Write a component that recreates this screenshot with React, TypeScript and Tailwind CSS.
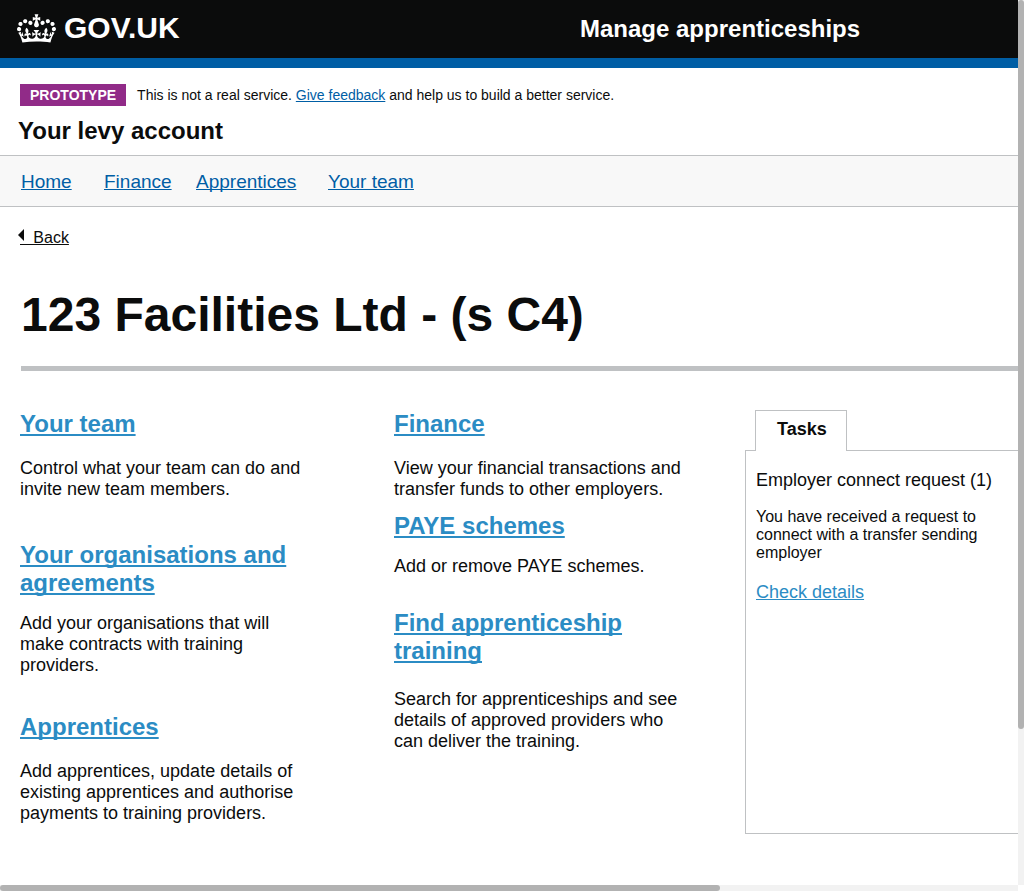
import type { ReactNode } from "react";

function Crown() {
  return (
    <svg viewBox="0 0 132 97" className="h-[29px] w-[39px]" fill="currentColor" aria-hidden="true">
      <path d="M25 30.2c3.5 1.5 7.7-.2 9.1-3.7 1.5-3.6-.2-7.8-3.9-9.2-3.6-1.4-7.6.3-9.1 3.9-1.4 3.5.3 7.5 3.9 9zM9 39.5c3.6 1.5 7.8-.2 9.2-3.7 1.5-3.6-.2-7.8-3.9-9.1-3.6-1.5-7.6.2-9.1 3.8-1.4 3.5.3 7.5 3.8 9zM4.4 57.2c3.5 1.5 7.7-.2 9.1-3.8 1.5-3.6-.2-7.7-3.9-9.1-3.5-1.5-7.6.3-9.1 3.8-1.4 3.5.3 7.6 3.9 9.1zm38.3-21.4c3.5 1.5 7.7-.2 9.1-3.8 1.5-3.6-.2-7.7-3.9-9.1-3.6-1.5-7.6.3-9.1 3.8-1.3 3.6.4 7.7 3.9 9.1zm64.4-5.6c-3.6 1.5-7.8-.2-9.1-3.7-1.5-3.6.2-7.8 3.8-9.2 3.6-1.4 7.7.3 9.2 3.9 1.3 3.5-.4 7.5-3.9 9zm15.9 9.3c-3.6 1.5-7.7-.2-9.1-3.7-1.5-3.6.2-7.8 3.7-9.1 3.6-1.5 7.7.2 9.2 3.8 1.5 3.5-.3 7.5-3.8 9zm4.7 17.7c-3.6 1.5-7.8-.2-9.2-3.8-1.5-3.6.2-7.7 3.9-9.1 3.6-1.5 7.7.3 9.2 3.8 1.3 3.5-.4 7.6-3.9 9.1zM89.3 35.8c-3.6 1.5-7.8-.2-9.2-3.8-1.4-3.6.2-7.7 3.9-9.1 3.6-1.5 7.7.3 9.2 3.8 1.4 3.6-.3 7.7-3.9 9.1zM69.7 17.7l8.9 4.7V9.3l-8.9 2.8c-.2-.3-.5-.6-.9-.9L72.4 0H59.6l3.5 11.2c-.3.3-.6.5-.9.9l-8.8-2.8v13.1l8.8-4.7c.3.3.6.7.9.9l-5 15.4v.1c-.2.8-.4 1.6-.4 2.4 0 4.1 3.1 7.5 7 8.1h.2c.3 0 .7.1 1 .1.4 0 .7 0 1-.1h.2c4-.6 7.1-4.1 7.1-8.1 0-.8-.1-1.7-.4-2.4V34l-5.1-15.4c.4-.2.7-.6 1-.9zM66 92.8c16.9 0 32.8 1.1 47.1 3.2 4-16.9 8.9-26.7 14-33.5l-9.6-3.4c1 4.9 1.1 7.2 0 10.2-1.5-1.4-3-4.3-4.2-8.7L108.6 76c2.8-2 5-3.2 7.5-3.3-4.4 9.4-10 11.9-13.6 11.2-4.3-.8-6.3-4.6-5.6-7.9 1-4.7 5.7-5.9 8-.5 4.3-8.7-3-11.4-7.6-8.8 7.1-7.2 7.9-13.5 2.1-21.1-8 6.1-8.1 12.3-4.5 20.8-4.7-5.4-12.1-2.5-9.5 6.2 3.4-5.2 7.9-2 7.2 3.1-.6 4.3-6.4 7.8-13.5 7.2-10.3-.9-10.9-8-11.2-13.8 2.5-.5 7.1 1.8 11 7.3L80.2 60c-4.1 4.4-8 5.3-12.3 5.4 1.4-4.4 8-11.6 8-11.6H55.5s6.4 7.2 7.9 11.6c-4.2-.1-8-1-12.3-5.4l1.4 16.4c3.9-5.5 8.5-7.7 10.9-7.3-.3 5.8-.9 12.8-11.1 13.8-7.2.6-12.9-2.9-13.5-7.2-.7-5 3.8-8.3 7.1-3.1 2.7-8.7-4.6-11.6-9.4-6.2 3.7-8.5 3.6-14.7-4.6-20.8-5.8 7.6-5 13.9 2.2 21.1-4.7-2.6-11.9.1-7.7 8.8 2.3-5.5 7.1-4.2 8.1.5.7 3.3-1.3 7.1-5.7 7.9-3.5.7-9-1.8-13.5-11.2 2.5.1 4.7 1.3 7.5 3.3l-4.7-15.4c-1.2 4.4-2.7 7.2-4.3 8.7-1.1-3-.9-5.3 0-10.2l-9.5 3.4c5 6.9 9.9 16.7 14 33.5 14.8-2.1 30.8-3.2 47.7-3.2z" />
    </svg>
  );
}

function Topic({ title, className, children }: { title: string; className: string; children: ReactNode }) {
  return (
    <section className={`flex max-w-[292px] flex-col ${className}`}>
      <h2 className="text-2xl leading-7 font-bold">
        <a href="#" className="text-[#2b8cc4] underline decoration-2 underline-offset-2 [text-decoration-skip-ink:none]">
          {title}
        </a>
      </h2>
      <p className="text-lg leading-[21px]">{children}</p>
    </section>
  );
}

const navItems = [
  { label: "Home", width: "w-[83px]" },
  { label: "Finance", width: "w-[92px]" },
  { label: "Apprentices", width: "w-[132px]" },
  { label: "Your team", width: "w-[92px]" },
];

export default function App() {
  return (
    <div className="flex min-h-screen flex-col bg-white font-['Liberation_Sans',Arial,sans-serif] text-[#0b0c0c]">
      <div className="flex flex-1">
        <div className="min-w-0 flex-1">
          <header className="flex h-[68px] items-center border-b-10 border-[#005ea5] bg-[#0b0c0c] pl-[17px] text-white">
            <a href="#" className="flex w-[563px] shrink-0 items-center gap-2 pb-[2px]">
              <Crown />
              <span className="text-[30px] leading-8 font-bold">GOV.UK</span>
            </a>
            <span className="text-2xl leading-7 font-bold">Manage apprenticeships</span>
          </header>

          <div className="flex items-center gap-[11px] pt-4 pl-5">
            <strong className="bg-[#912b88] px-[10px] text-sm leading-[22px]">
              <span className="text-white">PROTOTYPE</span>
            </strong>
            <p className="text-sm leading-[22px]">
              This is not a real service.{" "}
              <a href="#" className="text-[#005ea5] underline">Give feedback</a> and help us to build a better service.
            </p>
          </div>
          <p className="pt-[11px] pb-[10px] pl-[18px] text-2xl leading-7 font-bold">Your levy account</p>

          <nav className="flex border-y border-[#bfc1c3] bg-[#f8f8f8] pt-[15px] pb-[13px] pl-[21px] text-[19px] leading-[22px]">
            {navItems.map((item) => (
              <div key={item.label} className={item.width}>
                <a href="#" className="text-[#005ea5] underline [text-decoration-skip-ink:none]">{item.label}</a>
              </div>
            ))}
          </nav>

          <main className="pl-5">
            <div className="flex pt-[22px]">
              <a href="#" className="flex items-start text-base leading-[18px] underline">
                <svg viewBox="0 0 6 12" className="-mr-1 -ml-[2px] h-3 w-[6px]" fill="currentColor" aria-hidden="true">
                  <path d="M6 0v12L0 6z" />
                </svg>
                <span>{"\u00a0\u00a0\u00a0Back"}</span>
              </a>
            </div>
            <h1 className="pt-10 pb-[23px] pl-px text-5xl leading-[56px] font-bold">123 Facilities Ltd - (s C4)</h1>
            <hr className="ml-px border-t-5 border-[#bfc1c3]" />

            <div className="grid grid-cols-[374fr_351fr_273fr] pt-[39px]">
              <div className="flex flex-col">
                <Topic title="Your team" className="gap-5 pb-[41px]">
                  Control what your team can do and invite new team members.
                </Topic>
                <Topic title="Your organisations and agreements" className="gap-4 pb-[37px]">
                  Add your organisations that will make contracts with training providers.
                </Topic>
                <Topic title="Apprentices" className="gap-5">
                  Add apprentices, update details of existing apprentices and authorise payments to training providers.
                </Topic>
              </div>
              <div className="flex flex-col">
                <Topic title="Finance" className="gap-5 pb-3">
                  View your financial transactions and transfer funds to other employers.
                </Topic>
                <Topic title="PAYE schemes" className="gap-4 pb-8">
                  Add or remove PAYE schemes.
                </Topic>
                <Topic title="Find apprenticeship training" className="gap-6">
                  Search for apprenticeships and see details of approved providers who can deliver the training.
                </Topic>
              </div>
              <aside className="flex flex-col">
                <h2 className="z-10 ml-[10px] -mb-px self-start border border-b-0 border-[#bfc1c3] bg-white pt-2 pr-[19px] pb-[11px] pl-[21px] text-lg leading-[21px] font-bold">
                  Tasks
                </h2>
                <div className="min-h-[384px] border border-r-0 border-[#bfc1c3] pt-[19px] pl-[10px]">
                  <h3 className="text-lg leading-[21px]">Employer connect request (1)</h3>
                  <p className="max-w-[240px] pt-[17px] text-base leading-[18px]">
                    You have received a request to connect with a transfer sending employer
                  </p>
                  <p className="pt-5 text-lg leading-[21px]">
                    <a href="#" className="text-[#2b8cc4] underline">Check details</a>
                  </p>
                </div>
              </aside>
            </div>
          </main>
        </div>
        <div className="flex w-[6px] flex-col bg-[#f2f2f2]">
          <div className="flex-[729] rounded-full bg-[#b2b2b2]" />
          <div className="flex-[156]" />
        </div>
      </div>
      <div className="mr-[6px] flex h-[6px] bg-[#f2f2f2]">
        <div className="flex-[720] rounded-full bg-[#b2b2b2]" />
        <div className="flex-[298]" />
      </div>
    </div>
  );
}
